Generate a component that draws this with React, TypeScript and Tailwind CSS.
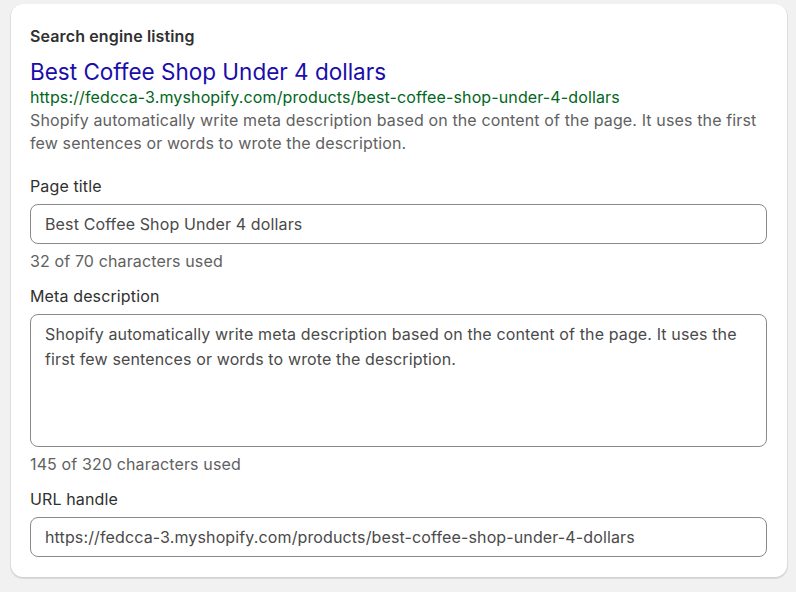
export default function App() {
  const url = "https://fedcca-3.myshopify.com/products/best-coffee-shop-under-4-dollars";
  const desc =
    "Shopify automatically write meta description based on the content of the page. It uses the first few sentences or words to wrote the description.";

  return (
    <div className="min-h-[592px] bg-[#f1f1f1] pt-[4px] pl-[11px] font-['Inter',sans-serif] tracking-[0.13px]">
      <div className="w-[776px] rounded-[12px] bg-white pl-[19px] pr-[20px] pt-[22px] pb-[20px] shadow-[0_1px_0_1px_rgba(0,0,0,0.06),0_1px_2px_rgba(0,0,0,0.1)]">
        {/* Preview */}
        <h2 className="text-[16px] leading-[20px] font-semibold text-[#303030]">Search engine listing</h2>
        <p className="mt-[12px] text-[22.5px] leading-[28px] tracking-normal text-[#1a0dab]">Best Coffee Shop Under 4 dollars</p>
        <p className="text-[16px] leading-[23px] text-[#006621]">{url}</p>
        <p className="text-[16px] leading-[23px] text-[#616161]">{desc}</p>

        {/* Page title */}
        <label className="mt-[20px] block text-[16px] leading-[22px] text-[#303030]">Page title</label>
        <input
          readOnly
          value="Best Coffee Shop Under 4 dollars"
          className="mt-[7px] block h-[40px] w-full rounded-[8px] border border-[#8a8a8a] px-[14px] text-[16px] tracking-[0.13px] text-[#4a4a4a] outline-none"
        />
        <p className="mt-[6px] text-[16px] leading-[22px] text-[#616161]">32 of 70 characters used</p>

        {/* Meta description */}
        <label className="mt-[13px] block text-[16px] leading-[22px] text-[#303030]">Meta description</label>
        <textarea
          readOnly
          value={desc}
          className="mt-[7px] block h-[133px] w-full resize-none rounded-[8px] border border-[#8a8a8a] px-[14px] pt-[7px] text-[16px] leading-[25px] tracking-[0.13px] text-[#4a4a4a] outline-none"
        />
        <p className="mt-[6px] text-[16px] leading-[22px] text-[#616161]">145 of 320 characters used</p>

        {/* URL handle */}
        <label className="mt-[13px] block text-[16px] leading-[22px] text-[#303030]">URL handle</label>
        <input
          readOnly
          value={url}
          className="mt-[7px] block h-[40px] w-full rounded-[8px] border border-[#8a8a8a] px-[14px] text-[16px] tracking-[0.13px] text-[#4a4a4a] outline-none"
        />
      </div>
    </div>
  );
}
